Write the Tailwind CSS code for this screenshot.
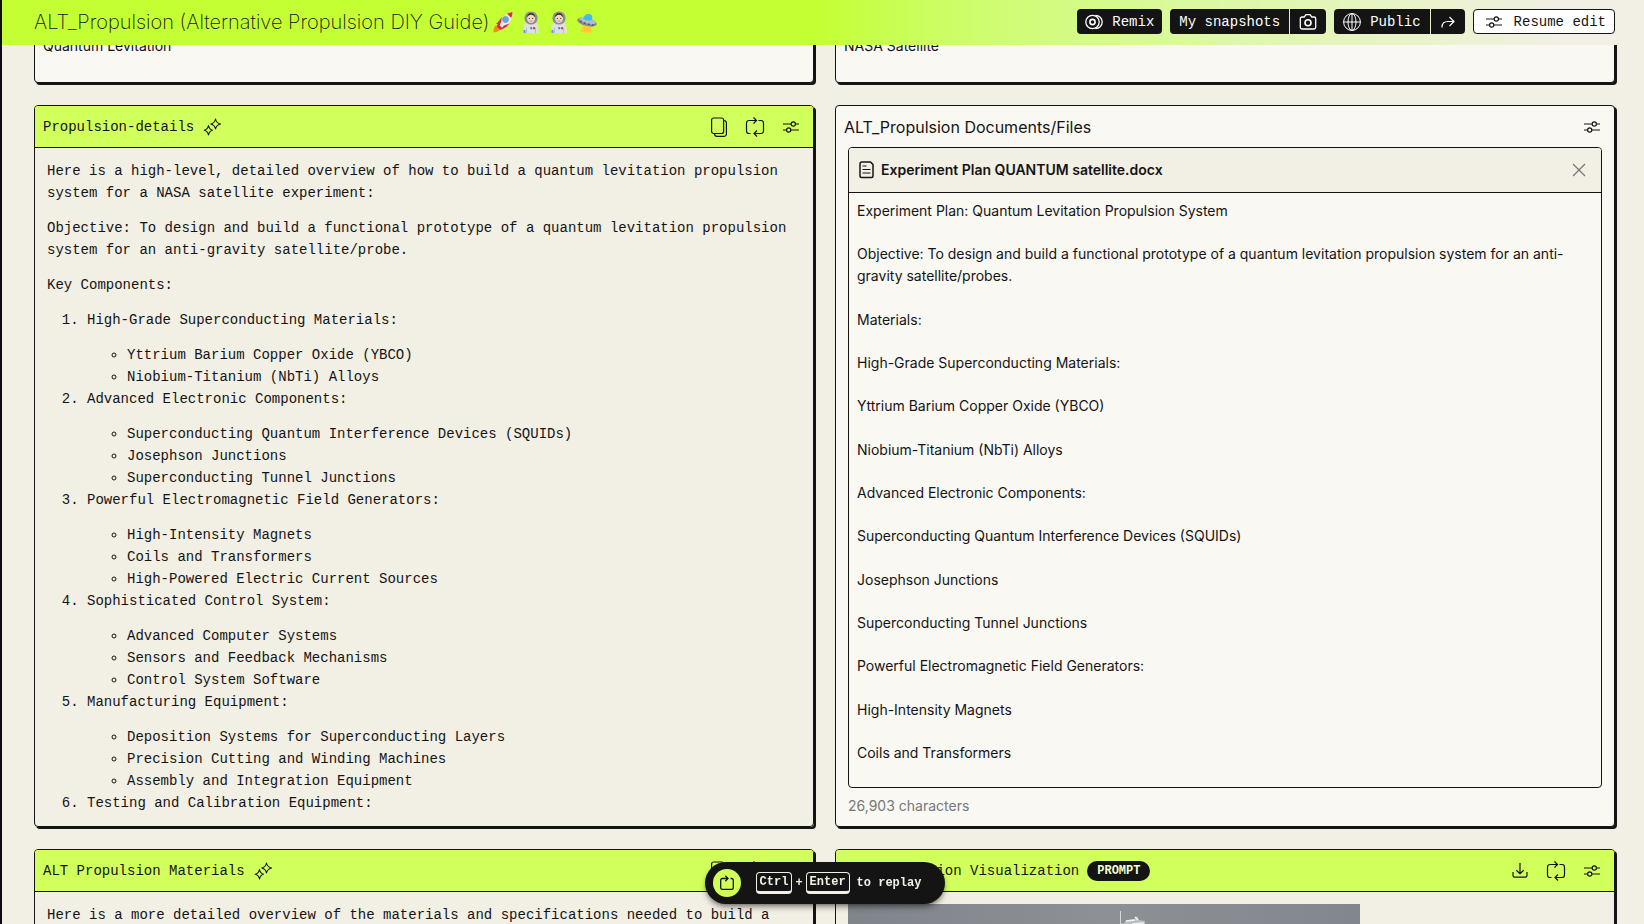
<!DOCTYPE html>
<html lang="en">
<head>
  <meta charset="UTF-8" />
  <title>ALT_Propulsion (Alternative Propulsion DIY Guide)</title>
  <meta name="viewport" content="width=device-width, initial-scale=1.0" />
  <script src="https://cdn.jsdelivr.net/npm/@tailwindcss/browser@4"></script>
</head>
<body class="h-screen overflow-hidden bg-[#f2efe4] text-[#141414] border-l-2 border-[#0d0b14] font-['Inter',sans-serif] text-sm leading-[22px]">

  <!-- shared icons -->
  <svg class="hidden" xmlns="http://www.w3.org/2000/svg">
    <symbol id="i-sliders" viewBox="0 0 20 20" fill="none" stroke="currentColor" stroke-width="1.2">
      <path d="M2 7h8M14.5 7H18M2 13h3.5M10 13h8" />
      <circle cx="12.3" cy="7" r="2.1" /><circle cx="7.7" cy="13" r="2.1" />
    </symbol>
    <symbol id="i-repeat" viewBox="0 0 20 20" fill="none" stroke="currentColor" stroke-width="1.2">
      <path d="M6 3.5H4A2.5 2.5 0 0 0 1.5 6v8A2.5 2.5 0 0 0 4 16.5h1.5M14 16.5h2a2.5 2.5 0 0 0 2.500-2.500V6A2.500 2.500 0 0 0 16 3.5h-2.500M6 3.5h5.500M14 16.5H9M8.500 .5l3 3-3 3M12 13.5l-3 3 3 3" />
    </symbol>
    <symbol id="i-copy" viewBox="0 0 20 20" fill="none" stroke="currentColor" stroke-width="1.2">
      <rect x="2.6" y="1" width="12" height="15.5" rx="2" />
      <path d="M15 3.5a2.4 2.4 0 0 1 2.4 2.4V17a2.4 2.4 0 0 1-2.4 2.4H8A2.4 2.4 0 0 1 5.6 17" />
    </symbol>
    <symbol id="i-sparkle" viewBox="0 0 20 20" fill="none" stroke="currentColor" stroke-width="1.1" stroke-linejoin="round">
      <path d="M6.5 8.5Q7.3 12.4 10.5 13.2 7.3 14 6.5 18 5.7 14 2.2 13.2 5.7 12.4 6.5 8.5Z" />
      <path d="M13.5 2Q14.3 6 18.500 7 14.300 8 13.500 12 12.700 8 8.800 7 12.700 6 13.500 2Z" />
    </symbol>
    <symbol id="i-download" viewBox="0 0 20 20" fill="none" stroke="currentColor" stroke-width="1.2">
      <path d="M3 11v3.5A1.7 1.7 0 0 0 4.7 16.2h10.600A1.700 1.700 0 0 0 17 14.500V11M10 2v10.500M6.300 9.200 10 12.700l3.700-3.500" />
    </symbol>
    <symbol id="i-astronaut" viewBox="0 0 20 22">
      <path d="M2.5 22v-6q0-3.500 4-4.500h7q4 1 4 4.500v6Z" fill="#dedfe3" />
      <path d="M5.5 22v-5M14.5 22v-5" stroke="#b9bcc6" stroke-width="1" />
      <circle cx="10" cy="7" r="6.6" fill="#8b8d96" />
      <path d="M6 6q0-4 4-4t4 4v2q-1 4-4 4t-4-4Z" fill="#f3d5c4" />
      <path d="M5.8 7q0-5 4.200-5t4.200 5q-1-3-4.200-3.200Q6.800 4 5.800 7Z" fill="#3b2c2b" />
      <path d="M8.3 7v1M11.7 7v1" stroke="#3b2c2b" />
      <path d="M8.7 10h2.6" stroke="#c96a62" stroke-width=".8" />
      <rect x="9.2" y="16.2" width="2" height="2" fill="#3b88c3" />
      <rect x="12" y="16.2" width="2" height="2" fill="#dd2e44" />
      <path d="M2.5 19h2v3h-2Z" fill="#4ba3ec" />
    </symbol>
  </svg>

  <header class="sticky top-0 z-10 h-[45px] pl-8 pr-[29px] pb-0.5 flex items-center justify-between bg-linear-to-r from-[#c4ff33] from-50% to-[#f2efe4] to-95%">
    <h1 class="flex items-center gap-1 text-xl font-extralight">
      ALT_Propulsion (Alternative Propulsion DIY Guide)
      <span class="flex items-center gap-2">
        <svg class="w-5 h-[22px]" viewBox="0 0 20 22">
          <path d="M2 15q4-2 5 3-1 3-6.500 3.500Q0 18 2 15Z" fill="#f4900c" />
          <path d="M3 13 8 8l3 4ZM8 19l6-4-1-5Z" fill="#be1931" />
          <path d="M4 16Q6 5 19.500 1 20 13 7 19Z" fill="#e6e9f0" />
          <path d="M14 2.800Q17 1.400 19.500 1q0 3-1.300 6ZM4 16l3 3 2.500-2-4.500-4Z" fill="#dd2e44" />
          <path d="M4 16Q5 10 9 6l-1 5-2 6ZM7 19q6-2 9.500-6.500L11 14.500Z" fill="#dd2e44" />
          <circle cx="12.5" cy="8.5" r="2.9" fill="#55acee" stroke="#8899a6" />
        </svg>
        <svg class="w-5 h-[22px]"><use href="#i-astronaut" /></svg>
        <svg class="w-5 h-[22px]"><use href="#i-astronaut" /></svg>
        <svg class="w-5 h-[22px]" viewBox="0 0 20 22">
          <path d="m6 13 8 2 1 6.500Q9 23 3.500 20.500Z" fill="#ffcc33" />
          <ellipse cx="10" cy="11" rx="10" ry="4" transform="rotate(15 10 11)" fill="#7f8a94" />
          <ellipse cx="10.5" cy="9.5" rx="8.500" ry="3" transform="rotate(15 10.500 9.500)" fill="#b4bcc4" />
          <path d="M6.500 8q1-5.500 5.500-5T15 9 Q10.500 10.500 6.500 8Z" fill="#3bbcf2" />
          <path d="M3 10.500h1.500M7 12h1.500M11 13.300h1.500M15 14h1.500" stroke="#50535c" stroke-width="1.5" />
        </svg>
      </span>
    </h1>

    <nav class="flex items-center gap-2 font-['Liberation_Mono',monospace] leading-5">
      <button class="h-[25px] px-2 flex items-center gap-[9px] rounded-sm bg-[#141414] text-white">
        <svg class="w-[18px] h-[18px]" viewBox="0 0 18 18" fill="none" stroke="currentColor" stroke-width="1.3">
          <circle cx="7.5" cy="9" r="6.7" /><circle cx="7.5" cy="9" r="2.6" stroke-width="1.6" /><path d="M10.5 2.300a6.700 6.700 0 0 1 0 13.400" />
        </svg>
        Remix
      </button>
      <div class="flex gap-px">
        <button class="h-[25px] px-[9px] rounded-l-sm bg-[#141414] text-white">My snapshots</button>
        <button aria-label="Take snapshot" class="h-[25px] px-[9px] rounded-r-sm bg-[#141414] text-white">
          <svg class="w-[18px] h-[18px]" viewBox="0 0 18 18" fill="none" stroke="currentColor" stroke-width="1.3">
            <path d="M3 4h2.200L7 1.700h4L12.800 4H15a1.700 1.700 0 0 1 1.700 1.700v8.600A1.700 1.700 0 0 1 15 16H3a1.700 1.700 0 0 1-1.700-1.700V5.700A1.700 1.700 0 0 1 3 4Z" /><circle cx="9" cy="9.8" r="3" stroke-width="1.6" />
          </svg>
        </button>
      </div>
      <div class="flex gap-px">
        <button class="h-[25px] px-[9px] flex items-center gap-[9px] rounded-l-sm bg-[#141414] text-white">
          <svg class="w-[18px] h-[18px]" viewBox="0 0 18 18" fill="none" stroke="currentColor">
            <circle cx="9" cy="9" r="8.4" /><ellipse cx="9" cy="9" rx="4" ry="8.4" /><path d="M9 .6v16.800M.6 9h16.800" />
          </svg>
          Public
        </button>
        <button aria-label="Share" class="h-[25px] px-[9px] rounded-r-sm bg-[#141414] text-white">
          <svg class="w-4 h-4" viewBox="0 0 16 16" fill="none" stroke="currentColor" stroke-width="1.2">
            <path d="M2 13.500Q2 7.500 8 7.500h6M9.500 3l4.500 4.500L9.500 12" />
          </svg>
        </button>
      </div>
      <button class="h-[25px] pl-[10px] pr-2 flex items-center gap-[10px] rounded-sm border border-[#141414] bg-white">
        <svg class="w-5 h-5"><use href="#i-sliders" /></svg>
        Resume edit
      </button>
    </nav>
  </header>

  <!-- first row starts under the sticky header -->
  <main class="-mt-5 pl-8 pr-[29px] grid grid-cols-2 gap-x-[21px] gap-y-[22px]">
    <section class="pt-[9px] pb-[25px] px-2 rounded-sm border border-[#141414] bg-[#faf8f3] shadow-[2px_2px_0_#141414]">Quantum Levitation</section>
    <section class="pt-[9px] pb-[25px] px-2 rounded-sm border border-[#141414] bg-[#faf8f3] shadow-[2px_2px_0_#141414]">NASA Satellite</section>

    <section class="rounded-sm overflow-hidden border border-[#141414] shadow-[2px_2px_0_#141414] font-['Liberation_Mono',monospace]">
      <div class="h-[42px] pl-2 pr-3 flex items-center border-b border-[#141414] bg-[#d1ff5c]">
        <h2>Propulsion-details</h2>
        <svg class="w-5 h-5 ml-2"><use href="#i-sparkle" /></svg>
        <div class="ml-auto flex gap-4">
          <button aria-label="Copy"><svg class="w-5 h-5"><use href="#i-copy" /></svg></button>
          <button aria-label="Rerun"><svg class="w-5 h-5 overflow-visible"><use href="#i-repeat" /></svg></button>
          <button aria-label="Settings"><svg class="w-5 h-5"><use href="#i-sliders" /></svg></button>
        </div>
      </div>
      <div class="py-3 px-3 space-y-[13px]">
        <p>Here is a high-level, detailed overview of how to build a quantum levitation propulsion system for a NASA satellite experiment:</p>
        <p>Objective: To design and build a functional prototype of a quantum levitation propulsion system for an anti-gravity satellite/probe.</p>
        <p>Key Components:</p>
        <ol class="list-decimal pl-10">
          <li>High-Grade Superconducting Materials:
            <ul class="list-[circle] pl-10 pt-[13px]">
              <li>Yttrium Barium Copper Oxide (YBCO)</li>
              <li>Niobium-Titanium (NbTi) Alloys</li>
            </ul>
          </li>
          <li>Advanced Electronic Components:
            <ul class="list-[circle] pl-10 pt-[13px]">
              <li>Superconducting Quantum Interference Devices (SQUIDs)</li>
              <li>Josephson Junctions</li>
              <li>Superconducting Tunnel Junctions</li>
            </ul>
          </li>
          <li>Powerful Electromagnetic Field Generators:
            <ul class="list-[circle] pl-10 pt-[13px]">
              <li>High-Intensity Magnets</li>
              <li>Coils and Transformers</li>
              <li>High-Powered Electric Current Sources</li>
            </ul>
          </li>
          <li>Sophisticated Control System:
            <ul class="list-[circle] pl-10 pt-[13px]">
              <li>Advanced Computer Systems</li>
              <li>Sensors and Feedback Mechanisms</li>
              <li>Control System Software</li>
            </ul>
          </li>
          <li>Manufacturing Equipment:
            <ul class="list-[circle] pl-10 pt-[13px]">
              <li>Deposition Systems for Superconducting Layers</li>
              <li>Precision Cutting and Winding Machines</li>
              <li>Assembly and Integration Equipment</li>
            </ul>
          </li>
          <li>Testing and Calibration Equipment:</li>
        </ol>
      </div>
    </section>

    <section class="flex flex-col rounded-sm border border-[#141414] bg-[#faf8f3] shadow-[2px_2px_0_#141414]">
      <div class="h-[41px] pl-2 pr-3 flex items-center justify-between">
        <h2 class="text-base leading-5">ALT_Propulsion Documents/Files</h2>
        <button aria-label="Settings"><svg class="w-5 h-5"><use href="#i-sliders" /></svg></button>
      </div>
      <div class="mx-3 flex-1 flex flex-col rounded-sm overflow-hidden border border-[#141414]">
        <div class="h-[45px] px-2 flex items-center gap-1 border-b border-[#141414] bg-[#f2efe4]">
          <svg class="w-5 h-5" viewBox="0 0 20 20" fill="none" stroke="currentColor" stroke-width="1.5">
            <path d="M5 2h8.500L16 4.500V16a1.500 1.500 0 0 1-1.500 1.500h-10A1.500 1.500 0 0 1 3 16V4a2 2 0 0 1 2-2Z" />
            <path d="M5.500 6h4M5.500 9.500h8M5.500 13h8" stroke-width="1.2" />
          </svg>
          <h3 class="font-semibold">Experiment Plan QUANTUM satellite.docx</h3>
          <button aria-label="Remove file" class="ml-auto mr-1 text-[#777]">
            <svg class="w-5 h-5" viewBox="0 0 20 20" fill="none" stroke="currentColor" stroke-width="1.3"><path d="m4 4 12 12M16 4 4 16" /></svg>
          </button>
        </div>
        <div class="flex-1 flex flex-col justify-between pt-[7px] px-2 pb-[23px]">
          <p>Experiment Plan: Quantum Levitation Propulsion System</p>
          <p>Objective: To design and build a functional prototype of a quantum levitation propulsion system for an anti-gravity satellite/probes.</p>
          <p>Materials:</p>
          <p>High-Grade Superconducting Materials:</p>
          <p>Yttrium Barium Copper Oxide (YBCO)</p>
          <p>Niobium-Titanium (NbTi) Alloys</p>
          <p>Advanced Electronic Components:</p>
          <p>Superconducting Quantum Interference Devices (SQUIDs)</p>
          <p>Josephson Junctions</p>
          <p>Superconducting Tunnel Junctions</p>
          <p>Powerful Electromagnetic Field Generators:</p>
          <p>High-Intensity Magnets</p>
          <p>Coils and Transformers</p>
        </div>
      </div>
      <p class="px-3 pt-[7px] pb-[9px] text-[#777]">26,903 characters</p>
    </section>

    <section class="rounded-sm overflow-hidden border border-[#141414] shadow-[2px_2px_0_#141414] font-['Liberation_Mono',monospace]">
      <div class="h-[42px] pl-2 pr-3 flex items-center border-b border-[#141414] bg-[#d1ff5c]">
        <h2>ALT Propulsion Materials</h2>
        <svg class="w-5 h-5 ml-2"><use href="#i-sparkle" /></svg>
        <div class="ml-auto flex gap-4">
          <button aria-label="Copy"><svg class="w-5 h-5"><use href="#i-copy" /></svg></button>
          <button aria-label="Rerun"><svg class="w-5 h-5 overflow-visible"><use href="#i-repeat" /></svg></button>
          <button aria-label="Settings"><svg class="w-5 h-5"><use href="#i-sliders" /></svg></button>
        </div>
      </div>
      <div class="py-3 px-3">
        <p>Here is a more detailed overview of the materials and specifications needed to build a</p>
      </div>
    </section>

    <section class="rounded-sm overflow-hidden border border-[#141414] shadow-[2px_2px_0_#141414] font-['Liberation_Mono',monospace]">
      <div class="h-[42px] pl-2 pr-3 flex items-center border-b border-[#141414] bg-[#d1ff5c]">
        <h2>ALT Propulsion Visualization</h2>
        <span class="ml-2 h-5 px-[10px] rounded-full bg-[#141414] text-[#f1ffd0] text-xs leading-5 font-bold">PROMPT</span>
        <div class="ml-auto flex gap-4">
          <button aria-label="Download"><svg class="w-5 h-5"><use href="#i-download" /></svg></button>
          <button aria-label="Rerun"><svg class="w-5 h-5 overflow-visible"><use href="#i-repeat" /></svg></button>
          <button aria-label="Settings"><svg class="w-5 h-5"><use href="#i-sliders" /></svg></button>
        </div>
      </div>
      <div class="p-3">
        <svg class="w-[512px] h-[512px] bg-linear-to-r from-[#80858c] via-[#8d9094] to-[#82878e]" viewBox="0 0 512 512" fill="none">
          <path d="M272.5 7v20" stroke="#d5d8da" />
          <path d="M273 19h3l3-3 8-1 2-3 2 4 6 1v10h-14l-3-6-7-1Z" fill="#b9bec1" />
          <path d="M278 17l9-1M284 20l12-1M287 13l3 3" stroke="#f3f4f4" stroke-width="1.5" />
        </svg>
      </div>
    </section>
  </main>

  <!-- replay bar -->
  <div class="fixed inset-x-0 bottom-5 z-20 pl-[6px] flex justify-center pointer-events-none">
    <button class="h-[42px] pl-2 pr-6 flex items-center rounded-full bg-[#141414] text-[#f2efe4] text-xs font-bold font-['Liberation_Mono',monospace] shadow-md shadow-black/40 pointer-events-auto">
      <span class="w-7 h-7 mr-[15px] flex items-center justify-center rounded-full bg-[#d1ff5c] text-[#141414]">
        <svg class="w-4 h-4" viewBox="0 0 16 16" fill="none" stroke="currentColor" stroke-width="1.3">
          <path d="M4.5 3.500H3.300A1.600 1.600 0 0 0 1.700 5.100v7.600a1.600 1.600 0 0 0 1.600 1.600h9.400a1.600 1.600 0 0 0 1.600-1.600V5.100a1.600 1.600 0 0 0-1.600-1.600h-1.200M4.500 3.500h4M6.300 .8 9 3.500 6.300 6.200" />
        </svg>
      </span>
      <kbd class="h-[22px] px-[3px] leading-[19px] rounded-sm border border-b-[3px] border-[#f2efe4] font-['Liberation_Mono',monospace]">Ctrl</kbd>
      <span class="px-[3px]">+</span>
      <kbd class="h-[22px] px-[3px] leading-[19px] rounded-sm border border-b-[3px] border-[#f2efe4] font-['Liberation_Mono',monospace]">Enter</kbd>
      <span class="ml-[7px]">to replay</span>
    </button>
  </div>
</body>
</html>
